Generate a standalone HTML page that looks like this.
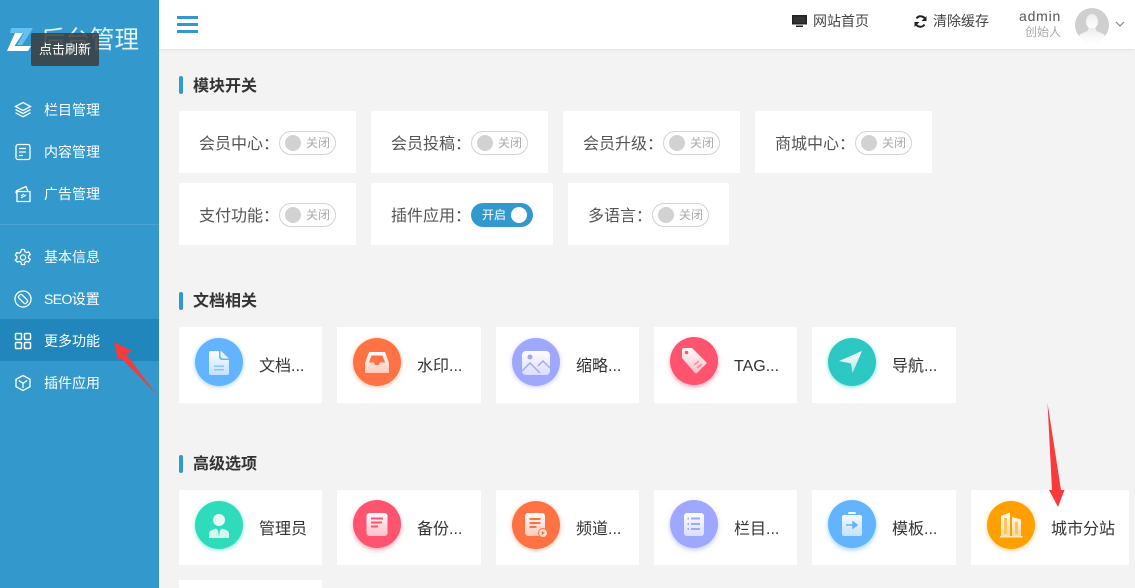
<!DOCTYPE html>
<html lang="zh"><head><meta charset="utf-8"><title>后台管理</title>
<style>
*{margin:0;padding:0;box-sizing:border-box}
html,body{width:1135px;height:588px;overflow:hidden;background:#f3f3f3;font-family:"Liberation Sans","Noto Sans CJK SC",sans-serif;color:#333}
.a{position:absolute;white-space:nowrap}
#side{left:0;top:0;width:159px;height:588px;background:#3398cc}
.nav{position:absolute;left:44px;color:#fff;font-size:14px;line-height:20px;white-space:nowrap}
.ni{position:absolute;left:14px;width:18px;height:18px;fill:none;stroke:#fff;stroke-width:1.3}
.card{position:absolute;background:#fff}
.h{position:absolute;left:193px;font-size:16px;font-weight:700;line-height:20px;color:#333;white-space:nowrap}
.bar{position:absolute;left:179px;width:4px;height:18px;background:#3398cc;border-radius:2px}
.lb{position:absolute;font-size:16px;line-height:20px;color:#555;white-space:nowrap}
.sw{position:absolute;width:57px;height:24px;border:1px solid #d2d2d2;border-radius:12px;background:#fff}
.sw i{position:absolute;left:5px;top:3px;width:16px;height:16px;border-radius:50%;background:#d2d2d2}
.sw b{position:absolute;left:26px;top:3px;font-weight:400;font-size:12px;line-height:17px;color:#aaa}
.on{position:absolute;width:62px;height:24px;border-radius:12px;background:#3398cc}
.on b{position:absolute;left:11px;top:3px;font-weight:400;font-size:12px;line-height:18px;color:#fff}
.on i{position:absolute;left:40px;top:4px;width:16px;height:16px;border-radius:50%;background:#fff}
.c{position:absolute;width:48px;height:48px;border-radius:50%}
.c svg{position:absolute;left:0;top:0;width:48px;height:48px}
.t{position:absolute;font-size:16px;line-height:20px;color:#333;white-space:nowrap}
</style></head><body>
<div class="a" id="side"></div>
<svg class="a" style="left:0;top:0" width="45" height="60"><path d="M11 28H33L30 33H10Z" fill="#63c0ef"/><path d="M24 33H30L22 45H17Z" fill="#63c0ef"/><path d="M15 33H23L14.500 46H31L28 51H7Z" fill="#fff"/></svg>
<div class="a" style="left:41px;top:25px;font-size:24.5px;line-height:32px;color:#e4f2f9">后台管理</div>
<div class="a" style="left:31px;top:33px;width:68px;height:33px;background:rgba(60,60,60,.85);border-radius:2px;color:#fff;font-size:13px;line-height:33px;text-align:center">点击刷新</div>

<div class="a" style="left:0;top:224px;width:159px;height:1px;background:#4aa3d2"></div>
<div class="a" style="left:0;top:319px;width:159px;height:42px;background:#2186bc"></div>

<svg class="ni" style="top:101px" viewBox="0 0 18 18"><path d="M9 1.500 16.500 5.500 9 9.500 1.500 5.500Z M1.500 8.500 9 12.500l7.500-4M1.500 11.800 9 15.800l7.500-4"/></svg>
<div class="nav" style="top:100px">栏目管理</div>
<svg class="ni" style="top:143px" viewBox="0 0 18 18"><rect x="2" y="1.500" width="14" height="15" rx="2"/><path d="M5 5.500h7M5 9h7M5 12.500h4"/></svg>
<div class="nav" style="top:142px">内容管理</div>
<svg class="ni" style="top:185px" viewBox="0 0 18 18"><path d="M3 6.500h13v10H3ZM1.500 6.500 3 9M2 6 12 1.500l2 5M7 13l5-3M7 11l3-2"/></svg>
<div class="nav" style="top:184px">广告管理</div>
<svg class="ni" style="top:248px" viewBox="0 0 18 18"><path d="M7.500 1.500h3l.5 2.200 1.600.9 2.100-.7 1.500 2.600-1.600 1.500v1.900l1.600 1.500-1.500 2.600-2.100-.7-1.600.9-.5 2.300h-3l-.5-2.300-1.600-.9-2.100.7L1.300 12l1.600-1.500V8.600L1.300 7.100l1.500-2.600 2.100.7 1.600-.9Z"/><circle cx="9" cy="9.500" r="2.600"/></svg>
<div class="nav" style="top:247px">基本信息</div>
<svg class="ni" style="top:290px" viewBox="0 0 18 18"><circle cx="9" cy="9" r="8"/><path d="M6 4.800 4.800 6a1.500 1.500 0 0 0 0 2l5.200 5.200a1.500 1.500 0 0 0 2 0L13.200 12a1.500 1.500 0 0 0 0-2L8 4.800a1.500 1.500 0 0 0-2 0Z"/></svg>
<div class="nav" style="top:289px"><span style="letter-spacing:-.6px">SEO</span>设置</div>
<svg class="ni" style="top:332px;stroke-width:1.500" viewBox="0 0 18 18"><rect x="1.500" y="1.500" width="6" height="6" rx="1"/><rect x="10.500" y="1.500" width="6" height="6" rx="1"/><rect x="1.500" y="10.500" width="6" height="6" rx="1"/><rect x="10.500" y="10.500" width="6" height="6" rx="1"/></svg>
<div class="nav" style="top:331px">更多功能</div>
<svg class="ni" style="top:374px" viewBox="0 0 18 18"><path d="M9 1.500 16 5.300v7.400L9 16.500 2 12.700V5.300ZM4.800 6.500 9 9.300l4.200-2.800M9 9.300V14"/></svg>
<div class="nav" style="top:373px">插件应用</div>

<div class="a" style="left:159px;top:0;width:976px;height:49px;background:#fff;box-shadow:0 1px 3px rgba(0,0,0,.08)"></div>
<svg class="a" style="left:177px;top:16px" width="21" height="17"><path d="M0 0h21v3H0ZM0 7h21v3H0ZM0 14h21v3H0Z" fill="#3398cc"/></svg>
<svg class="a" style="left:792px;top:15px" width="15" height="13" viewBox="0 0 15 13"><path d="M0 0h15v9.500H0ZM4 10.500h7V12H4Z" fill="#222"/><path d="M1.500 1.500h12V8h-12Z" fill="#333"/></svg>
<div class="a" style="left:813px;top:11px;font-size:14px;line-height:20px;color:#444">网站首页</div>
<svg class="a" style="left:914px;top:15px" width="13" height="13" viewBox="0 0 13 13" fill="none" stroke="#222" stroke-width="2"><path d="M11.500 5A5 5 0 0 0 2.500 3.500M1.500 8A5 5 0 0 0 10.500 9.500"/><path d="M12.500 1v5h-5ZM.5 12V7h5Z" fill="#222" stroke="none"/></svg>
<div class="a" style="left:933px;top:11px;font-size:14px;line-height:20px;color:#444">清除缓存</div>
<div class="a" style="left:1019px;top:7px;font-size:14px;line-height:18px;color:#555;letter-spacing:.8px">admin</div>
<div class="a" style="left:1025px;top:24px;font-size:12px;line-height:17px;color:#aaa">创始人</div>
<svg class="a" style="left:1075px;top:8px" width="34" height="34" viewBox="0 0 34 34"><defs><clipPath id="av"><circle cx="17" cy="17" r="17"/></clipPath><linearGradient id="avg" x1="0" y1="0" x2="0" y2="1"><stop offset="0" stop-color="#ececec"/><stop offset="1" stop-color="#fff"/></linearGradient></defs><circle cx="17" cy="17" r="17" fill="#cfcfcf"/><g clip-path="url(#av)" fill="url(#avg)"><ellipse cx="17" cy="13.500" rx="6" ry="7.500"/><path d="M13.500 20h7l1 3 8 3.500V34H4.500v-7.500l8-3.500Z"/></g></svg>
<svg class="a" style="left:1115px;top:21px" width="10" height="7" fill="none" stroke="#888" stroke-width="1.200"><path d="M1 1l4 4 4-4"/></svg>

<div class="bar" style="top:76px"></div><div class="h" style="top:77px">模块开关</div>
<div class="card" style="left:179px;top:111px;width:177px;height:62px"></div>
<div class="card" style="left:371px;top:111px;width:177px;height:62px"></div>
<div class="card" style="left:563px;top:111px;width:177px;height:62px"></div>
<div class="card" style="left:755px;top:111px;width:177px;height:62px"></div>
<div class="card" style="left:179px;top:183px;width:177px;height:62px"></div>
<div class="card" style="left:371px;top:183px;width:182px;height:62px"></div>
<div class="card" style="left:568px;top:183px;width:161px;height:62px"></div>

<div class="lb" style="left:199px;top:135px">会员中心：</div><div class="sw" style="left:279px;top:131px"><i></i><b>关闭</b></div>
<div class="lb" style="left:391px;top:135px">会员投稿：</div><div class="sw" style="left:471px;top:131px"><i></i><b>关闭</b></div>
<div class="lb" style="left:583px;top:135px">会员升级：</div><div class="sw" style="left:663px;top:131px"><i></i><b>关闭</b></div>
<div class="lb" style="left:775px;top:135px">商城中心：</div><div class="sw" style="left:855px;top:131px"><i></i><b>关闭</b></div>
<div class="lb" style="left:199px;top:207px">支付功能：</div><div class="sw" style="left:279px;top:203px"><i></i><b>关闭</b></div>
<div class="lb" style="left:391px;top:207px">插件应用：</div><div class="on" style="left:471px;top:203px"><b>开启</b><i></i></div>
<div class="lb" style="left:588px;top:207px">多语言：</div><div class="sw" style="left:652px;top:203px"><i></i><b>关闭</b></div>

<div class="bar" style="top:292px"></div><div class="h" style="top:292px">文档相关</div>
<div class="card" style="left:179px;top:327px;width:143px;height:76px"></div>
<div class="card" style="left:337px;top:327px;width:144px;height:76px"></div>
<div class="card" style="left:496px;top:327px;width:143px;height:76px"></div>
<div class="card" style="left:654px;top:327px;width:143px;height:76px"></div>
<div class="card" style="left:812px;top:327px;width:144px;height:76px"></div>

<svg width="0" height="0" style="position:absolute"><defs><linearGradient id="g" x1="0" y1="0" x2="0" y2="1"><stop offset="0" stop-color="#fff" stop-opacity=".98"/><stop offset="1" stop-color="#fff" stop-opacity=".62"/></linearGradient></defs></svg>

<div class="c" style="left:195px;top:338px;background:#62b4ff;box-shadow:0 1px 4px rgba(98,180,255,.6)"><svg viewBox="0 0 48 48"><path d="M16 13h8v6a3 3 0 0 0 3 3h7v13a2 2 0 0 1-2 2H16a2 2 0 0 1-2-2V15a2 2 0 0 1 2-2Z" fill="url(#g)"/><path d="M25.500 12.500l8.500 8h-6a2.500 2.500 0 0 1-2.500-2.500Z" fill="#e6f3ff"/><path d="M19 27.500h10v1.500H19ZM19 31h10v1.500H19Z" fill="#8ac7ff"/></svg></div>
<div class="t" style="left:259px;top:357px">文档...</div>
<div class="c" style="left:353px;top:338px;background:#ff7243;box-shadow:0 1px 4px rgba(255,114,67,.5)"><svg viewBox="0 0 48 48"><path d="M16 14H32L36 25V35H12V25Z" fill="url(#g)"/><path d="M18.500 17.500H29.500L32 24.500H27L26 27H22L21 24.500H16Z" fill="#ff7243"/></svg></div>
<div class="t" style="left:417px;top:357px">水印...</div>
<div class="c" style="left:512px;top:338px;background:#9fa8ff;box-shadow:0 1px 4px rgba(159,168,255,.6)"><svg viewBox="0 0 48 48"><rect x="10" y="13" width="28" height="24" rx="4" fill="url(#g)"/><circle cx="18" cy="19" r="2.500" fill="#9fa8ff"/><path d="M10 33l8-8 10 10M26 28l5-5 7 7" fill="none" stroke="#9fa8ff" stroke-width="1.500"/></svg></div>
<div class="t" style="left:576px;top:357px">缩略...</div>
<div class="c" style="left:670px;top:337px;background:#ff5470;box-shadow:0 2px 5px rgba(255,84,112,.5)"><svg viewBox="0 0 48 48"><path d="M14 11h8l14 14q1 1 0 2l-9 9q-1 1-2 0L12 21V13q0-2 2-2Z" fill="url(#g)"/><circle cx="16.500" cy="15.500" r="1.800" fill="#ff5470"/><path d="M24 28l5-4M27 31l5-4" stroke="#ff8a9d" stroke-width="1.500"/></svg></div>
<div class="t" style="left:734px;top:357px">TAG...</div>
<div class="c" style="left:828px;top:338px;background:#2dc7c4;box-shadow:0 1px 4px rgba(45,199,196,.6)"><svg viewBox="0 0 48 48"><path d="M11 23 34 13 24.500 35 23 25.500Z" fill="url(#g)"/></svg></div>
<div class="t" style="left:892px;top:357px">导航...</div>

<div class="bar" style="top:455px"></div><div class="h" style="top:455px">高级选项</div>
<div class="card" style="left:179px;top:490px;width:143px;height:75px"></div>
<div class="card" style="left:337px;top:490px;width:144px;height:75px"></div>
<div class="card" style="left:496px;top:490px;width:143px;height:75px"></div>
<div class="card" style="left:654px;top:490px;width:143px;height:75px"></div>
<div class="card" style="left:812px;top:490px;width:144px;height:75px"></div>
<div class="card" style="left:971px;top:490px;width:158px;height:75px"></div>
<div class="card" style="left:179px;top:580px;width:143px;height:8px"></div>

<div class="c" style="left:195px;top:501px;background:#2edcbb;box-shadow:0 1px 4px rgba(46,220,187,.6)"><svg viewBox="0 0 48 48"><circle cx="24" cy="19" r="6" fill="#eaf7f8"/><path d="M14 37v-4q0-3 3-4l4-1.500 2 2 1 6 1-6 2-2 4 1.500q3 1 3 4v4Z" fill="#d6f7ee"/></svg></div>
<div class="t" style="left:259px;top:520px">管理员</div>
<div class="c" style="left:353px;top:500px;background:#ff5470;box-shadow:0 2px 5px rgba(255,84,112,.5)"><svg viewBox="0 0 48 48"><rect x="13.500" y="13" width="21" height="23" rx="3" fill="url(#g)"/><path d="M18 18.500h12M18 22.500h11M18 26.500h7" stroke="#ff5470" stroke-width="2"/></svg></div>
<div class="t" style="left:417px;top:520px">备份...</div>
<div class="c" style="left:512px;top:501px;background:#ff7243;box-shadow:0 1px 4px rgba(255,114,67,.5)"><svg viewBox="0 0 48 48"><rect x="13" y="12" width="20" height="23" rx="3" fill="url(#g)"/><path d="M17.500 18h11M17.500 22h11M17.500 26h7" stroke="#ff7243" stroke-width="2"/><circle cx="31" cy="32" r="4.500" fill="#ffd9cb" stroke="#ff7243"/><path d="M29.800 30l3 2-3 2Z" fill="#ff7243"/></svg></div>
<div class="t" style="left:576px;top:520px">频道...</div>
<div class="c" style="left:670px;top:500px;background:#9fa8ff;box-shadow:0 2px 5px rgba(159,168,255,.6)"><svg viewBox="0 0 48 48"><rect x="14" y="13" width="20" height="23" rx="3" fill="url(#g)"/><path d="M21 18.500h9M21 24h9M21 29h9M17.500 18.500h1.500M17.500 24h1.500M17.500 29h1.500" stroke="#9fa8ff" stroke-width="2"/></svg></div>
<div class="t" style="left:734px;top:520px">栏目...</div>
<div class="c" style="left:828px;top:500px;background:#62b4ff;box-shadow:0 2px 5px rgba(98,180,255,.6)"><svg viewBox="0 0 48 48"><path d="M16 15h4v-1.500q0-1.500 1.500-1.500h5q1.500 0 1.500 1.500V15h4q2 0 2 2v17q0 2-2 2H16q-2 0-2-2V17q0-2 2-2Z" fill="url(#g)"/><path d="M20 15h8v-1h-8Z" fill="#62b4ff"/><path d="M18 25h9M25 22l4 3-4 3Z" stroke="#62b4ff" stroke-width="1.500" fill="#62b4ff"/></svg></div>
<div class="t" style="left:892px;top:520px">模板...</div>
<div class="c" style="left:987px;top:501px;background:#ff9f00;box-shadow:0 1px 4px rgba(255,159,0,.5)"><svg viewBox="0 0 48 48"><path d="M14 35V15l9-3.500V35ZM25 35V16l9 2.500V35Z" fill="url(#g)"/><path d="M13 35h22.500v1.500H13Z" fill="#ffe8c0"/><path d="M17 17h3v16h-3ZM28 21h3v12h-3Z" fill="#ffc35c"/></svg></div>
<div class="t" style="left:1051px;top:520px">城市分站</div>

<svg class="a" style="left:0;top:0" width="1135" height="588"><path d="M114 342 132 351 126 354 157 395 121 358 118 360Z" fill="#f93a3a"/><path d="M1047.500 403 1061 490H1064.500L1058 507 1049 490H1052Z" fill="#f93a3a"/></svg>
</body></html>
